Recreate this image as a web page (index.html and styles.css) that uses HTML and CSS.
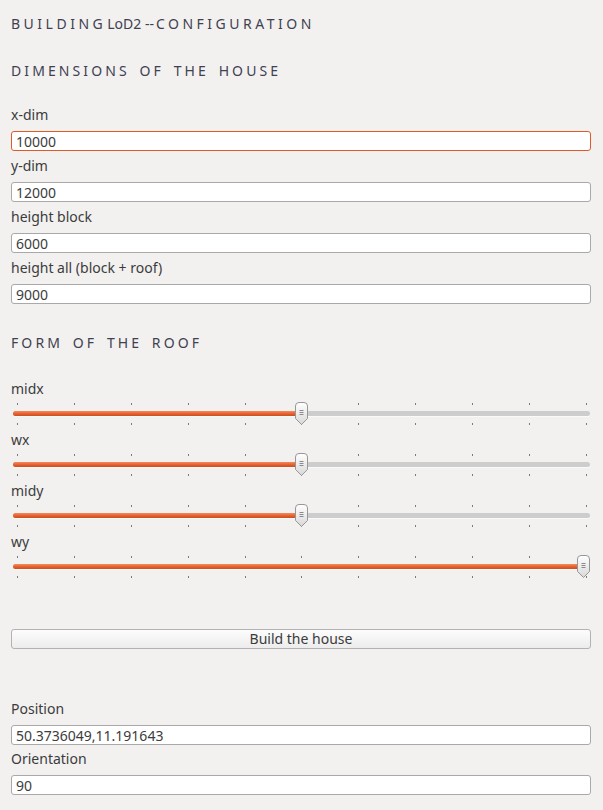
FILE: index.html
```html
<!DOCTYPE html>
<html>
<head>
<meta charset="utf-8">
<link rel="stylesheet" href="styles.css">
</head>
<body>
<div class="page">
  <h1 class="title"><span class="spaced">Building</span><span class="tight">LoD2 --</span><span class="spaced">Configuration</span></h1>
  <h2 class="section">Dimensions of the house</h2>

  <div class="fields">
    <div class="field">
      <label class="label">x-dim</label>
      <input class="input focused" type="text" value="10000">
    </div>
    <div class="field">
      <label class="label">y-dim</label>
      <input class="input" type="text" value="12000">
    </div>
    <div class="field">
      <label class="label">height block</label>
      <input class="input" type="text" value="6000">
    </div>
    <div class="field">
      <label class="label">height all (block + roof)</label>
      <input class="input" type="text" value="9000">
    </div>
  </div>

  <h2 class="section roof">Form of the roof</h2>

  <div class="sliders">
    <div class="slider-field">
      <div class="label">midx</div>
      <div class="slider" data-value="0.5"></div>
    </div>
    <div class="slider-field">
      <div class="label">wx</div>
      <div class="slider" data-value="0.5"></div>
    </div>
    <div class="slider-field">
      <div class="label">midy</div>
      <div class="slider" data-value="0.5"></div>
    </div>
    <div class="slider-field">
      <div class="label">wy</div>
      <div class="slider" data-value="1"></div>
    </div>
  </div>

  <button class="button" type="button">Build the house</button>

  <div class="fields bottom">
    <div class="field">
      <label class="label">Position</label>
      <input class="input" type="text" value="50.3736049,11.191643">
    </div>
    <div class="field">
      <label class="label">Orientation</label>
      <input class="input" type="text" value="90">
    </div>
  </div>
</div>
<script src="script.js"></script>
</body>
</html>
```

FILE: script.js
```js
document.querySelectorAll('.slider').forEach(function (el) {
  var v = parseFloat(el.getAttribute('data-value'));
  var html = '<div class="ticks">';
  for (var i = 0; i < 11; i++) html += '<span class="tick"></span>';
  html += '</div>';
  html += '<div class="track"><div class="fill" style="width:' + (5 + v * 565) + 'px"></div></div>';
  html += '<div class="ticks">';
  for (var j = 0; j < 11; j++) html += '<span class="tick"></span>';
  html += '</div>';
  html += '<svg class="thumb" style="left:' + (1 + v * 565) + 'px" width="13" height="24" viewBox="0 0 13 24">' +
    '<defs><linearGradient id="tg" x1="0" y1="0" x2="0" y2="1"><stop offset="0" stop-color="#ffffff"/><stop offset="1" stop-color="#d8d8d8"/></linearGradient></defs>' +
    '<path d="M0.5,4 Q0.5,0.5 4,0.5 H9 Q12.5,0.5 12.5,4 V16.5 L6.5,22.5 L0.5,16.5 Z" fill="url(#tg)" stroke="#979797"/>' +
    '<path d="M4.5,8.5 H8.5 M4.5,10.5 H8.5 M4.5,12.5 H8.5" stroke="#8a8a8a" stroke-width="1"/>' +
    '</svg>';
  el.innerHTML = html;
});
```

FILE: styles.css
```css
* { box-sizing: border-box; }
html, body {
  margin: 0;
  padding: 0;
  background: #f2f1f0;
}
body {
  font-family: "Noto Sans", "Open Sans", sans-serif;
  font-size: 14px;
  color: #3c3c3c;
}
.page {
  padding: 16px 12px 0 11px;
  display: flex;
  flex-direction: column;
}
.title, .section {
  margin: 0;
  font-size: 14px;
  font-weight: normal;
  line-height: 16px;
  color: #3f4150;
}
.title .spaced {
  text-transform: uppercase;
  letter-spacing: 3.5px;
}
.title .tight {
  letter-spacing: 0;
  margin-left: 1px;
  margin-right: 2px;
}
.section {
  margin-top: 31px;
  text-transform: uppercase;
  letter-spacing: 3.1px;
  word-spacing: 3px;
}
.fields {
  margin-top: 27px;
  display: flex;
  flex-direction: column;
  gap: 6px;
}
.field {
  display: flex;
  flex-direction: column;
}
.label {
  display: block;
  line-height: 18px;
  height: 18px;
  margin-bottom: 7px;
}
.input {
  width: 580px;
  height: 20px;
  margin: 0;
  padding: 0 4px;
  font: inherit;
  font-size: 14px;
  color: #3c3c3c;
  background: #fff;
  border: 1px solid #a9a9a9;
  border-radius: 3px;
  outline: none;
}
.input.focused {
  border-color: #e05a28;
}
.roof {
  margin-top: 31px;
}
.sliders {
  margin-top: 29px;
  display: flex;
  flex-direction: column;
}
.slider-field .label {
  margin-bottom: 0;
}
.slider {
  position: relative;
  width: 580px;
  height: 33px;
  padding-top: 5px;
}
.ticks {
  display: flex;
  justify-content: space-between;
  padding: 0 4px 0 6px;
  height: 3px;
}
.tick {
  width: 1px;
  height: 2px;
  background: #7a7a7a;
}
.track {
  margin: 5px 1px 0 2px;
  height: 5px;
  border-radius: 3px;
  background: #cdcdcd;
  box-shadow: 0 1px 0 #fafafa;
  position: relative;
}
.fill {
  height: 5px;
  border-radius: 3px;
  background: linear-gradient(#f58a5c, #e35d2b 60%, #c9501f);
}
.ticks + .track + .ticks {
  margin-top: 7px;
}
.thumb {
  position: absolute;
  top: 4px;
}
.button {
  margin-top: 45px;
  width: 580px;
  height: 20px;
  padding: 0;
  font: inherit;
  font-size: 14px;
  color: #3c3c3c;
  background: linear-gradient(#fdfdfd, #ececec);
  border: 1px solid #b2b2b2;
  border-radius: 3px;
  line-height: 18px;
}
.bottom {
  margin-top: 51px;
  gap: 5px;
}
```
